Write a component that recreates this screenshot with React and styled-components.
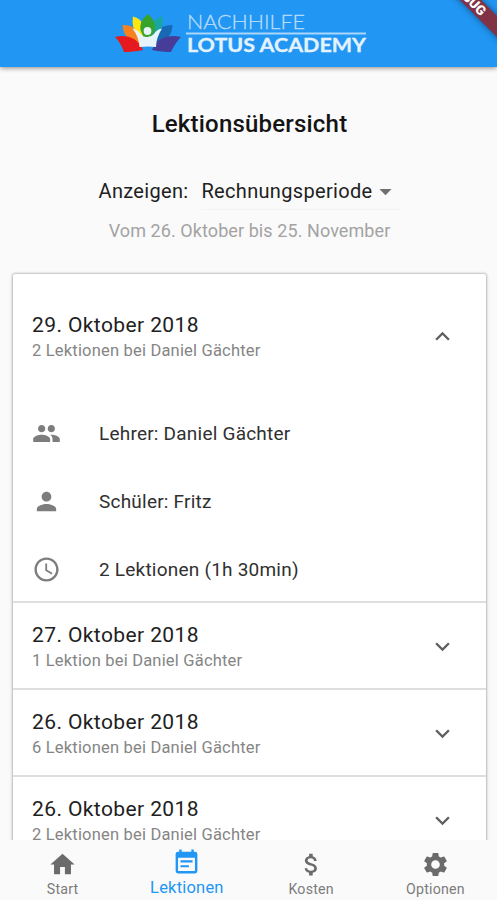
import { useState } from "react";
import styled, { createGlobalStyle } from "styled-components";
import {
  MdPeople,
  MdPerson,
  MdAccessTime,
  MdExpandLess,
  MdExpandMore,
  MdHome,
  MdAttachMoney,
  MdSettings,
  MdArrowDropDown,
} from "react-icons/md";

const GlobalStyle = createGlobalStyle`
  * {
    box-sizing: border-box;
  }
  body {
    margin: 0;
    background-color: #fafafa;
    font-family: Roboto, "Liberation Sans", sans-serif;
  }
`;

const Screen = styled.div`
  position: relative;
  width: 100%;
  height: 100vh;
  display: flex;
  flex-direction: column;
  overflow: hidden;
  background-color: #fafafa;
`;

const Header = styled.header`
  position: relative;
  z-index: 1;
  flex: none;
  height: 67px;
  display: flex;
  justify-content: center;
  padding-right: 16px;
  background-color: #2196f3;
  box-shadow: 0 1px 5px rgba(0, 0, 0, 0.45);
`;

const DebugBanner = styled.div`
  position: absolute;
  z-index: 2;
  top: -12px;
  right: -44px;
  width: 150px;
  height: 15px;
  padding-left: 7px;
  transform: rotate(45deg);
  background-color: #823247;
  box-shadow: 0 0 6px rgba(0, 0, 0, 0.5);
  color: #fff;
  font-size: 13.5px;
  font-weight: 900;
  line-height: 15px;
  text-align: center;
`;

const Content = styled.main`
  flex: 1;
  min-height: 0;
  display: flex;
  flex-direction: column;
  overflow: hidden;
  padding: 40px 11px 0 13px;
`;

const Title = styled.h1`
  margin: 0;
  font-size: 24px;
  font-weight: 500;
  line-height: 34px;
  letter-spacing: 0.2px;
  text-align: center;
  color: #141414;
`;

const Filter = styled.div`
  display: flex;
  justify-content: center;
  gap: 13px;
  margin-top: 33px;
  font-size: 20px;
  line-height: 35px;
  color: #212121;
  letter-spacing: 0.32px;
`;

const Select = styled.div`
  display: flex;
  align-items: center;
  border-bottom: 1px solid #f3f3f3;

  svg {
    margin-left: -1px;
  }
`;

const Period = styled.p`
  margin: 7px 0 0;
  font-size: 18px;
  line-height: 28px;
  letter-spacing: 0.08px;
  text-align: center;
  color: #a3a3a3;
`;

const Panels = styled.div`
  margin-top: 29px;
  flex: none;
  background-color: #fff;
  border-radius: 2px;
  box-shadow: 0 0 2px 1px rgba(0, 0, 0, 0.2), 0 1px 5px rgba(0, 0, 0, 0.12);
`;

const Panel = styled.section`
  border-bottom: 2px solid #dedede;
`;

const PanelHeader = styled.div`
  display: flex;
  align-items: center;
  justify-content: space-between;
  height: ${(props) => (props.$open ? "125px" : "85px")};
  padding: ${(props) => (props.$open ? "0" : "2px")} 29px 0 19px;
  color: #5f5f5f;
  cursor: pointer;
`;

const PanelDate = styled.div`
  font-size: 21px;
  line-height: 28px;
  letter-spacing: 0.4px;
  color: #212121;
`;

const PanelInfo = styled.div`
  font-size: 16.5px;
  line-height: 24px;
  letter-spacing: 0.19px;
  color: #858585;
`;

const Details = styled.div`
  margin-bottom: -2px;
`;

const DetailRow = styled.div`
  display: flex;
  align-items: center;
  height: 68px;
  padding-left: 19px;
  gap: 38px;
  font-size: 19px;
  letter-spacing: 0.22px;
  color: #303030;

  svg {
    color: #7d7d7d;
  }
`;

const BottomNav = styled.nav`
  flex: none;
  display: flex;
  height: 60px;
  background-color: #fafafa;
`;

const NavItem = styled.div`
  flex: 1;
  display: flex;
  flex-direction: column;
  align-items: center;
  padding: ${(props) => (props.$active ? "8px" : "10px")} 0 0 1px;
  color: ${(props) => (props.$active ? "#2196f3" : "#6b6b6b")};
  cursor: pointer;

  svg {
    flex: none;
  }
`;

const NavLabel = styled.span`
  font-size: ${(props) => (props.$active ? "16.5px" : "14.2px")};
  line-height: ${(props) => (props.$active ? "22px" : "21px")};
  letter-spacing: 0.2px;
  color: ${(props) => (props.$active ? "#2196f3" : "#7c7c7c")};
`;

const CalendarIcon = ({ size }) => (
  <svg width={size} height={size} viewBox="0 0 24 24" fill="currentColor">
    <path
      fillRule="evenodd"
      d="M6 1.2h2V3h8V1.2h2V3h1a2 2 0 0 1 2 2v14a2 2 0 0 1-2 2H5a2 2 0 0 1-2-2V5a2 2 0 0 1 2-2h1zM5 8v11h14V8z"
    />
    <path d="M7 10.2h10v1.8H7zM7 14.2h7V16H7z" />
  </svg>
);

const lessons = [
  {
    date: "29. Oktober 2018",
    info: "2 Lektionen bei Daniel Gächter",
    details: [
      { icon: MdPeople, text: "Lehrer: Daniel Gächter" },
      { icon: MdPerson, text: "Schüler: Fritz" },
      { icon: MdAccessTime, text: "2 Lektionen (1h 30min)" },
    ],
  },
  { date: "27. Oktober 2018", info: "1 Lektion bei Daniel Gächter", details: [] },
  { date: "26. Oktober 2018", info: "6 Lektionen bei Daniel Gächter", details: [] },
  { date: "26. Oktober 2018", info: "2 Lektionen bei Daniel Gächter", details: [] },
];

const tabs = [
  { label: "Start", icon: MdHome },
  { label: "Lektionen", icon: CalendarIcon },
  { label: "Kosten", icon: MdAttachMoney },
  { label: "Optionen", icon: MdSettings },
];

const Logo = () => (
  <svg width="267" height="67" viewBox="107 0 267 67">
    <path d="M133 16.5 Q142 19 144.5 27 L143 38 L138 36 Q131 27 133 16.5Z" fill="#ffe610" />
    <path d="M162.5 16.5 Q153 19 150.5 27 L152 38 L157 36 Q164 27 162.5 16.5Z" fill="#18a6a0" />
    <path d="M148 14 Q139 21 140.5 30 L144 38 H151 L155 30 Q156 21 148 14Z" fill="#35a32c" />
    <path d="M122.5 25 Q132 24.5 137 31 L144 46 L137 44 Q123 38 122.5 25Z" fill="#f5821f" />
    <path d="M172.5 25 Q163 24.5 158 31 L152 46 L159 44 Q172 38 172.5 25Z" fill="#1769b5" />
    <path d="M115 37 Q126 34.5 134 39 Q140 43 143 50 Q132 52 124 52 Q121 43 115 37Z" fill="#e5191e" />
    <path d="M181 37 Q169 34.5 161 39 Q155 43 152 50 Q163 52 171 52 Q175 43 181 37Z" fill="#473c98" />
    <path
      d="M132.5 28.5 Q137 29 141 34.5 Q144 37.5 147.5 37 Q151 37 154 34 Q157 29 162 28.5 Q156 38 156 47 Q147.5 46 139.5 47 Q139 37 132.5 28.5Z"
      fill="#e7f4fc"
    />
    <circle cx="147.5" cy="31" r="3.9" fill="#e7f4fc" />
    <g fontFamily="Lato, sans-serif">
      <text
        x="187"
        y="28.5"
        fontSize="20.5"
        fontWeight="300"
        fill="#b8ddfb"
        stroke="#b8ddfb"
        strokeWidth="0.3"
        textLength="118"
        lengthAdjust="spacingAndGlyphs"
      >
        NACHHILFE
      </text>
      <text
        x="187"
        y="51.7"
        fontSize="18.5"
        fontWeight="700"
        fill="#e3f2fd"
        stroke="#e3f2fd"
        strokeWidth="0.3"
        textLength="179"
        lengthAdjust="spacingAndGlyphs"
      >
        LOTUS ACADEMY
      </text>
    </g>
    <rect x="186" y="32.5" width="180" height="2" fill="#a9d6fa" />
  </svg>
);

const LessonPanel = ({ lesson, open, onToggle }) => (
  <Panel>
    <PanelHeader $open={open} onClick={onToggle}>
      <div>
        <PanelDate>{lesson.date}</PanelDate>
        <PanelInfo>{lesson.info}</PanelInfo>
      </div>
      {open ? <MdExpandLess size={29} /> : <MdExpandMore size={29} />}
    </PanelHeader>
    {open && (
      <Details>
        {lesson.details.map(({ icon: Icon, text }) => (
          <DetailRow key={text}>
            <Icon size={29} />
            {text}
          </DetailRow>
        ))}
      </Details>
    )}
  </Panel>
);

const App = () => {
  const [openIndex, setOpenIndex] = useState(0);
  const [activeTab, setActiveTab] = useState(1);

  return (
    <Screen>
      <GlobalStyle />
      <Header>
        <Logo />
      </Header>
      <DebugBanner>DEBUG</DebugBanner>
      <Content>
        <Title>Lektionsübersicht</Title>
        <Filter>
          <span>Anzeigen:</span>
          <Select>
            Rechnungsperiode
            <MdArrowDropDown size={29} color="#707070" />
          </Select>
        </Filter>
        <Period>Vom 26. Oktober bis 25. November</Period>
        <Panels>
          {lessons.map((lesson, index) => (
            <LessonPanel
              key={index}
              lesson={lesson}
              open={openIndex === index}
              onToggle={() => setOpenIndex(openIndex === index ? -1 : index)}
            />
          ))}
        </Panels>
      </Content>
      <BottomNav>
        {tabs.map(({ label, icon: Icon }, index) => (
          <NavItem
            key={label}
            $active={activeTab === index}
            onClick={() => setActiveTab(index)}
          >
            <Icon size={29} />
            <NavLabel $active={activeTab === index}>{label}</NavLabel>
          </NavItem>
        ))}
      </BottomNav>
    </Screen>
  );
};

export default App;
